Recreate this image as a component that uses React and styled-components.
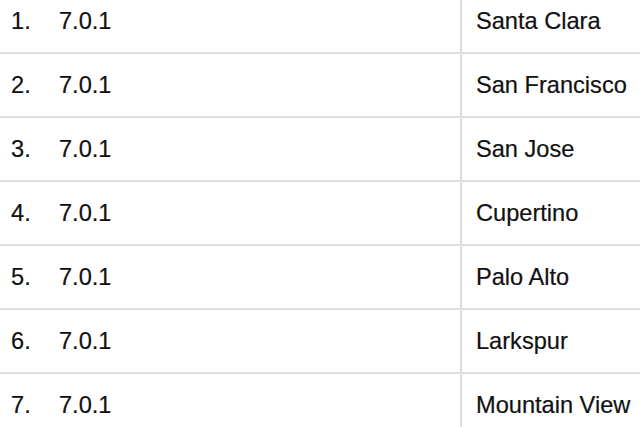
import styled, { createGlobalStyle } from 'styled-components';

const rows = [
    { version: '7.0.1', city: 'Santa Clara' },
    { version: '7.0.1', city: 'San Francisco' },
    { version: '7.0.1', city: 'San Jose' },
    { version: '7.0.1', city: 'Cupertino' },
    { version: '7.0.1', city: 'Palo Alto' },
    { version: '7.0.1', city: 'Larkspur' },
    { version: '7.0.1', city: 'Mountain View' },
];

const App = () => {
    return (
        <>
            <GlobalStyle />
            <Table>
                {rows.map(({ version, city }, i) => (
                    <Row key={i}>
                        <Index>{i + 1}.</Index>
                        <Version>{version}</Version>
                        <City>{city}</City>
                    </Row>
                ))}
            </Table>
        </>
    );
};

export default App;

const GlobalStyle = createGlobalStyle`
    html, body {
        margin: 0;
        padding: 0;
        background: #fff;
        overflow: hidden;
    }
`;

const Table = styled.div`
    margin-top: -10px;
    font-family: "Liberation Sans", Arial, sans-serif;
    font-size: 23.6px;
    color: #111;
    -webkit-text-stroke: 0.2px #111;
`;

const Row = styled.div`
    display: grid;
    grid-template-columns: 48px 412px 1fr;
    height: 62px;
    border-bottom: 2px solid #dedede;
`;

const Cell = styled.div`
    display: flex;
    align-items: center;
    white-space: nowrap;
`;

const Index = styled(Cell)`
    padding-left: 11px;
`;

const Version = styled(Cell)`
    padding-left: 11px;
`;

const City = styled(Cell)`
    border-left: 2px solid #dedede;
    padding-left: 14px;
`;
